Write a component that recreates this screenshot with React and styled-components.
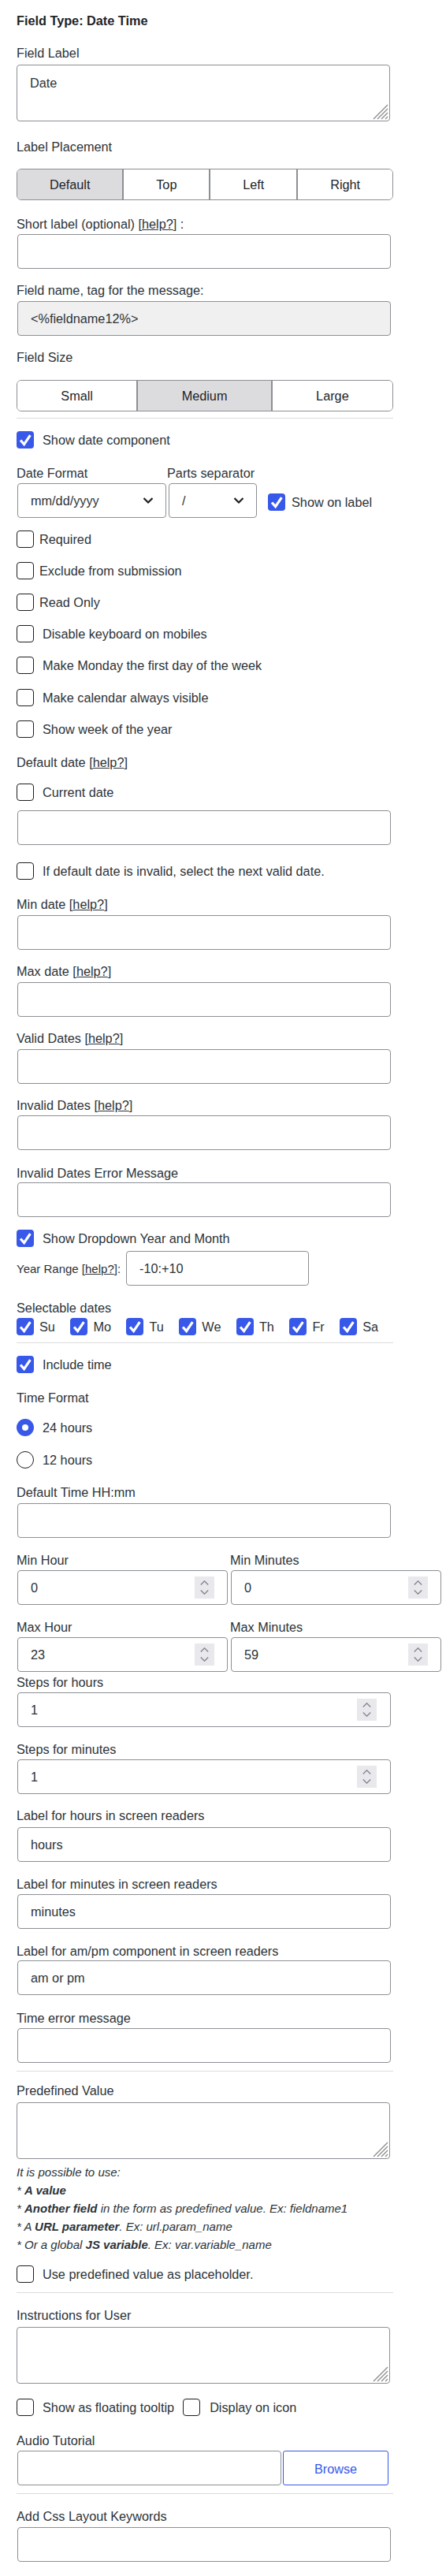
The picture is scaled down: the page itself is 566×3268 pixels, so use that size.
import React from "react";
import styled, { createGlobalStyle, css } from "styled-components";

const GlobalStyle = createGlobalStyle`
  body {
    margin: 0;
    background: #fff;
    font-family: "Liberation Sans", Arial, sans-serif;
    color: #2c3338;
  }
`;

const BLUE = "#3858e9";
const BORDER = "#8c8f94";

const Panel = styled.div`
  width: 478px;
  margin-left: 21px;
  padding: 16px 0 18px;
  font-size: 16.25px;
`;

const Title = styled.div`
  font-weight: bold;
  line-height: 20px;
  color: #1d2327;
`;

const Label = styled.div`
  line-height: 20px;
  margin-top: ${({ $mt }) => $mt ?? 17}px;
  white-space: nowrap;
`;

const Help = styled.span`
  text-decoration: underline;
`;

const fieldBox = css`
  box-sizing: border-box;
  height: 44px;
  border: 1px solid ${BORDER};
  border-radius: 4px;
  background: #fff;
  font: inherit;
  color: #2c3338;
  outline: none;
`;

const TextInput = styled.input`
  ${fieldBox}
  display: block;
  width: ${({ $w }) => ($w ? `${$w}px` : "calc(100% - 4px)")};
  margin: ${({ $mt }) => $mt ?? 4}px 0 0 1px;
  padding: 0 16px;
  background: ${({ $muted }) => ($muted ? "#f0f0f1" : "#fff")};
`;

const AreaWrap = styled.div`
  position: relative;
  width: calc(100% - 4px);
  margin-top: ${({ $mt }) => $mt ?? 5}px;
`;

const Area = styled.textarea`
  ${fieldBox}
  display: block;
  width: 100%;
  height: 72px;
  resize: none;
  padding: 12px 16px;
  line-height: 20px;
`;

const Grip = styled.svg`
  position: absolute;
  right: 2px;
  bottom: 2px;
`;

const Segmented = styled.div`
  display: flex;
  box-sizing: border-box;
  height: 40px;
  margin-top: ${({ $mt }) => $mt}px;
  border: 1px solid ${BORDER};
  border-radius: 6px;
  overflow: hidden;
`;

const Segment = styled.div`
  flex: 1 1 auto;
  display: flex;
  align-items: center;
  justify-content: center;
  background: ${({ $active }) => ($active ? "#dcdcde" : "#fff")};
  color: #1d2327;

  & + & {
    border-left: 2px solid ${BORDER};
  }
`;

const Divider = styled.hr`
  height: 0;
  border: 0;
  border-top: 1px solid #dcdcde;
  margin: ${({ $mt }) => $mt}px 0 0;
`;

const CheckRow = styled.label`
  display: flex;
  align-items: center;
  height: 22px;
  gap: ${({ $gap }) => $gap ?? 11}px;
  margin-top: ${({ $mt }) => $mt ?? 0}px;
  margin-left: ${({ $ml }) => $ml ?? 0}px;
  white-space: nowrap;
`;

const Box = styled.span`
  flex: none;
  box-sizing: border-box;
  width: 22px;
  height: 22px;
  display: inline-flex;
  border-radius: ${({ $round }) => ($round ? "50%" : "4px")};
  border: ${({ $on }) => ($on ? "none" : "1px solid #1e1e1e")};
  background: ${({ $on }) => ($on ? BLUE : "#fff")};
  align-items: center;
  justify-content: center;
`;

const Dot = styled.span`
  width: 8px;
  height: 8px;
  border-radius: 50%;
  background: #fff;
`;

const Check = ({ on }) => (
  <Box $on={on}>
    {on && (
      <svg width="22" height="22" viewBox="0 0 22 22">
        <path d="M5 11.5 L9.6 16.6 L17.4 5.2" fill="none" stroke="#fff" strokeWidth="3.2" />
      </svg>
    )}
  </Box>
);

const Option = ({ on, children, gap, mt, ml }) => (
  <CheckRow $gap={gap} $mt={mt} $ml={ml}>
    <Check on={on} />
    {children}
  </CheckRow>
);

const Radio = ({ on, children, mt }) => (
  <CheckRow $mt={mt}>
    <Box $round $on={on}>{on && <Dot />}</Box>
    {children}
  </CheckRow>
);

const DateRow = styled.div`
  display: flex;
  align-items: flex-end;
  margin-top: 21px;
`;

const Col = styled.div`
  width: ${({ $w }) => $w}px;
  flex: none;
`;

const Select = styled.div`
  ${fieldBox}
  display: flex;
  align-items: center;
  justify-content: space-between;
  width: ${({ $w }) => $w}px;
  margin: 3px 0 0 ${({ $ml }) => $ml ?? 1}px;
  padding: 0 15px 0 16px;
`;

const Chevron = () => (
  <svg width="14" height="10" viewBox="0 0 14 10">
    <path d="M1.5 2 L7 7.5 L12.5 2" fill="none" stroke="#1e1e1e" strokeWidth="2.2" />
  </svg>
);

const SideCheck = styled.div`
  margin: 0 0 9px 14px;
`;

const Inline = styled.div`
  display: flex;
  align-items: center;
  margin-top: ${({ $mt }) => $mt}px;
`;

const SmallLabel = styled.span`
  font-size: 15px;
  white-space: nowrap;
  margin-right: 6px;
`;

const Days = styled.div`
  display: flex;
  gap: 19.5px;
  margin-top: 3px;
`;

const Pair = styled.div`
  display: grid;
  grid-template-columns: 1fr 1fr;
  column-gap: 2px;
  margin-top: ${({ $mt }) => $mt}px;
`;

const NumberField = styled.div`
  ${fieldBox}
  display: flex;
  align-items: center;
  width: ${({ $full }) => ($full ? "calc(100% - 4px)" : "calc(100% - 2px)")};
  margin: 3px 0 0 1px;
  padding: 0 ${({ $full }) => ($full ? 17 : 16)}px 0 16px;
`;

const Bare = styled.input`
  flex: 1;
  min-width: 0;
  border: 0;
  padding: 0;
  font: inherit;
  color: #2c3338;
  background: transparent;
  outline: none;
`;

const Spin = styled.span`
  flex: none;
  width: 25px;
  height: 28px;
  background: #e9e9ed;
  display: flex;
  flex-direction: column;
  align-items: center;
  justify-content: center;
  gap: 6px;
`;

const Spinner = () => (
  <Spin>
    <svg width="11" height="6" viewBox="0 0 11 6">
      <path d="M0.8 5.4 L5.5 0.8 L10.2 5.4" fill="none" stroke="#85858d" strokeWidth="1.4" />
    </svg>
    <svg width="11" height="6" viewBox="0 0 11 6">
      <path d="M0.8 0.6 L5.5 5.2 L10.2 0.6" fill="none" stroke="#85858d" strokeWidth="1.4" />
    </svg>
  </Spin>
);

const NumberInput = ({ value, full }) => (
  <NumberField $full={full}>
    <Bare readOnly defaultValue={value} />
    <Spinner />
  </NumberField>
);

const Hint = styled.div`
  margin-top: 5px;
  font-size: 15px;
  font-style: italic;
  line-height: 23px;
  color: #2c3338;

  b {
    font-weight: bold;
  }
`;

const BrowseButton = styled.button`
  box-sizing: border-box;
  width: 134px;
  height: 44px;
  margin-left: 2px;
  padding-top: 3px;
  border: 1px solid ${BLUE};
  border-radius: 3px;
  background: #fff;
  color: ${BLUE};
  font: inherit;
`;

const TextArea = ({ value, mt }) => (
  <AreaWrap $mt={mt}>
    <Area readOnly defaultValue={value} />
    <Grip width="20" height="20" viewBox="0 0 20 20">
      <g stroke="#8a8a8a" strokeWidth="1.3">
        <path d="M19 1 L1 19" />
        <path d="M19 6 L6 19" />
        <path d="M19 11 L11 19" />
        <path d="M19 16 L16 19" />
      </g>
    </Grip>
  </AreaWrap>
);

const days = ["Su", "Mo", "Tu", "We", "Th", "Fr", "Sa"];

export default function App() {
  return (
    <>
      <GlobalStyle />
      <Panel>
        <Title>Field Type: Date Time</Title>

        <Label $mt={21}>Field Label</Label>
        <TextArea value="Date" />

        <Label $mt={22}>Label Placement</Label>
        <Segmented $mt={18}>
          <Segment $active>Default</Segment>
          <Segment>Top</Segment>
          <Segment>Left</Segment>
          <Segment>Right</Segment>
        </Segmented>

        <Label $mt={20}>
          Short label (optional) [<Help>help?</Help>] :
        </Label>
        <TextInput readOnly $mt={3} />

        <Label>Field name, tag for the message:</Label>
        <TextInput readOnly $muted defaultValue="<%fieldname12%>" />

        <Label>Field Size</Label>
        <Segmented $mt={19}>
          <Segment>Small</Segment>
          <Segment $active>Medium</Segment>
          <Segment>Large</Segment>
        </Segmented>

        <Divider $mt={8} />

        <Option on mt={16}>Show date component</Option>

        <DateRow>
          <Col $w={191}>
            <Label $mt={0}>Date Format</Label>
            <Select $w={189}>
              mm/dd/yyyy
              <Chevron />
            </Select>
          </Col>
          <Col $w={114}>
            <Label $mt={0}>Parts separator</Label>
            <Select $w={112} $ml={2}>
              /
              <Chevron />
            </Select>
          </Col>
          <SideCheck>
            <Option on gap={8}>Show on label</Option>
          </SideCheck>
        </DateRow>

        <Option gap={7} mt={16}>Required</Option>
        <Option gap={7} mt={18}>Exclude from submission</Option>
        <Option gap={7} mt={18}>Read Only</Option>
        <Option mt={18}>Disable keyboard on mobiles</Option>
        <Option mt={18}>Make Monday the first day of the week</Option>
        <Option mt={19}>Make calendar always visible</Option>
        <Option mt={18}>Show week of the year</Option>

        <Label $mt={21}>
          Default date [<Help>help?</Help>]
        </Label>
        <Option mt={17}>Current date</Option>
        <TextInput readOnly $mt={12} />

        <Option mt={22}>If default date is invalid, select the next valid date.</Option>

        <Label $mt={21}>
          Min date [<Help>help?</Help>]
        </Label>
        <TextInput readOnly />

        <Label>
          Max date [<Help>help?</Help>]
        </Label>
        <TextInput readOnly />

        <Label>
          Valid Dates [<Help>help?</Help>]
        </Label>
        <TextInput readOnly />

        <Label>
          Invalid Dates [<Help>help?</Help>]
        </Label>
        <TextInput readOnly $mt={3} />

        <Label $mt={19}>Invalid Dates Error Message</Label>
        <TextInput readOnly $mt={2} />

        <Option on mt={16}>Show Dropdown Year and Month</Option>

        <Inline $mt={5}>
          <SmallLabel>
            Year Range [<Help>help?</Help>]:
          </SmallLabel>
          <TextInput readOnly $w={232} $mt={0} defaultValue="-10:+10" />
        </Inline>

        <Label $mt={18}>Selectable dates</Label>
        <Days>
          {days.map((d) => (
            <Option key={d} on gap={7}>
              {d}
            </Option>
          ))}
        </Days>

        <Divider $mt={9} />

        <Option on mt={16}>Include time</Option>

        <Label $mt={21}>Time Format</Label>
        <Radio on mt={17}>24 hours</Radio>
        <Radio mt={19}>12 hours</Radio>

        <Label $mt={20}>Default Time HH:mm</Label>
        <TextInput readOnly />

        <Pair $mt={18}>
          <div>
            <Label $mt={0}>Min Hour</Label>
            <NumberInput value="0" />
          </div>
          <div>
            <Label $mt={0}>Min Minutes</Label>
            <NumberInput value="0" />
          </div>
        </Pair>

        <Pair $mt={18}>
          <div>
            <Label $mt={0}>Max Hour</Label>
            <NumberInput value="23" />
          </div>
          <div>
            <Label $mt={0}>Max Minutes</Label>
            <NumberInput value="59" />
          </div>
        </Pair>

        <Label $mt={3}>Steps for hours</Label>
        <NumberInput full value="1" />

        <Label $mt={18}>Steps for minutes</Label>
        <NumberInput full value="1" />

        <Label>Label for hours in screen readers</Label>
        <TextInput readOnly $mt={5} defaultValue="hours" />

        <Label $mt={18}>Label for minutes in screen readers</Label>
        <TextInput readOnly $mt={3} defaultValue="minutes" />

        <Label $mt={18}>Label for am/pm component in screen readers</Label>
        <TextInput readOnly $mt={2} defaultValue="am or pm" />

        <Label $mt={19}>Time error message</Label>
        <TextInput readOnly $mt={3} />

        <Divider $mt={10} />

        <Label $mt={14}>Predefined Value</Label>
        <TextArea />
        <Hint>
          It is possible to use:
          <br />* <b>A value</b>
          <br />* <b>Another field</b> in the form as predefined value. Ex: fieldname1
          <br />* A <b>URL parameter</b>. Ex: url.param_name
          <br />* Or a global <b>JS variable</b>. Ex: var.variable_name
        </Hint>

        <Option mt={15}>Use predefined value as placeholder.</Option>

        <Divider $mt={12} />

        <Label $mt={18}>Instructions for User</Label>
        <TextArea />

        <Inline $mt={19}>
          <Option>Show as floating tooltip</Option>
          <Option gap={12} ml={11}>Display on icon</Option>
        </Inline>

        <Label $mt={21}>Audio Tutorial</Label>
        <Inline $mt={3}>
          <TextInput readOnly $w={335} $mt={0} />
          <BrowseButton type="button">Browse</BrowseButton>
        </Inline>

        <Divider $mt={10} />

        <Label $mt={18}>Add Css Layout Keywords</Label>
        <TextInput readOnly />
      </Panel>
    </>
  );
}
